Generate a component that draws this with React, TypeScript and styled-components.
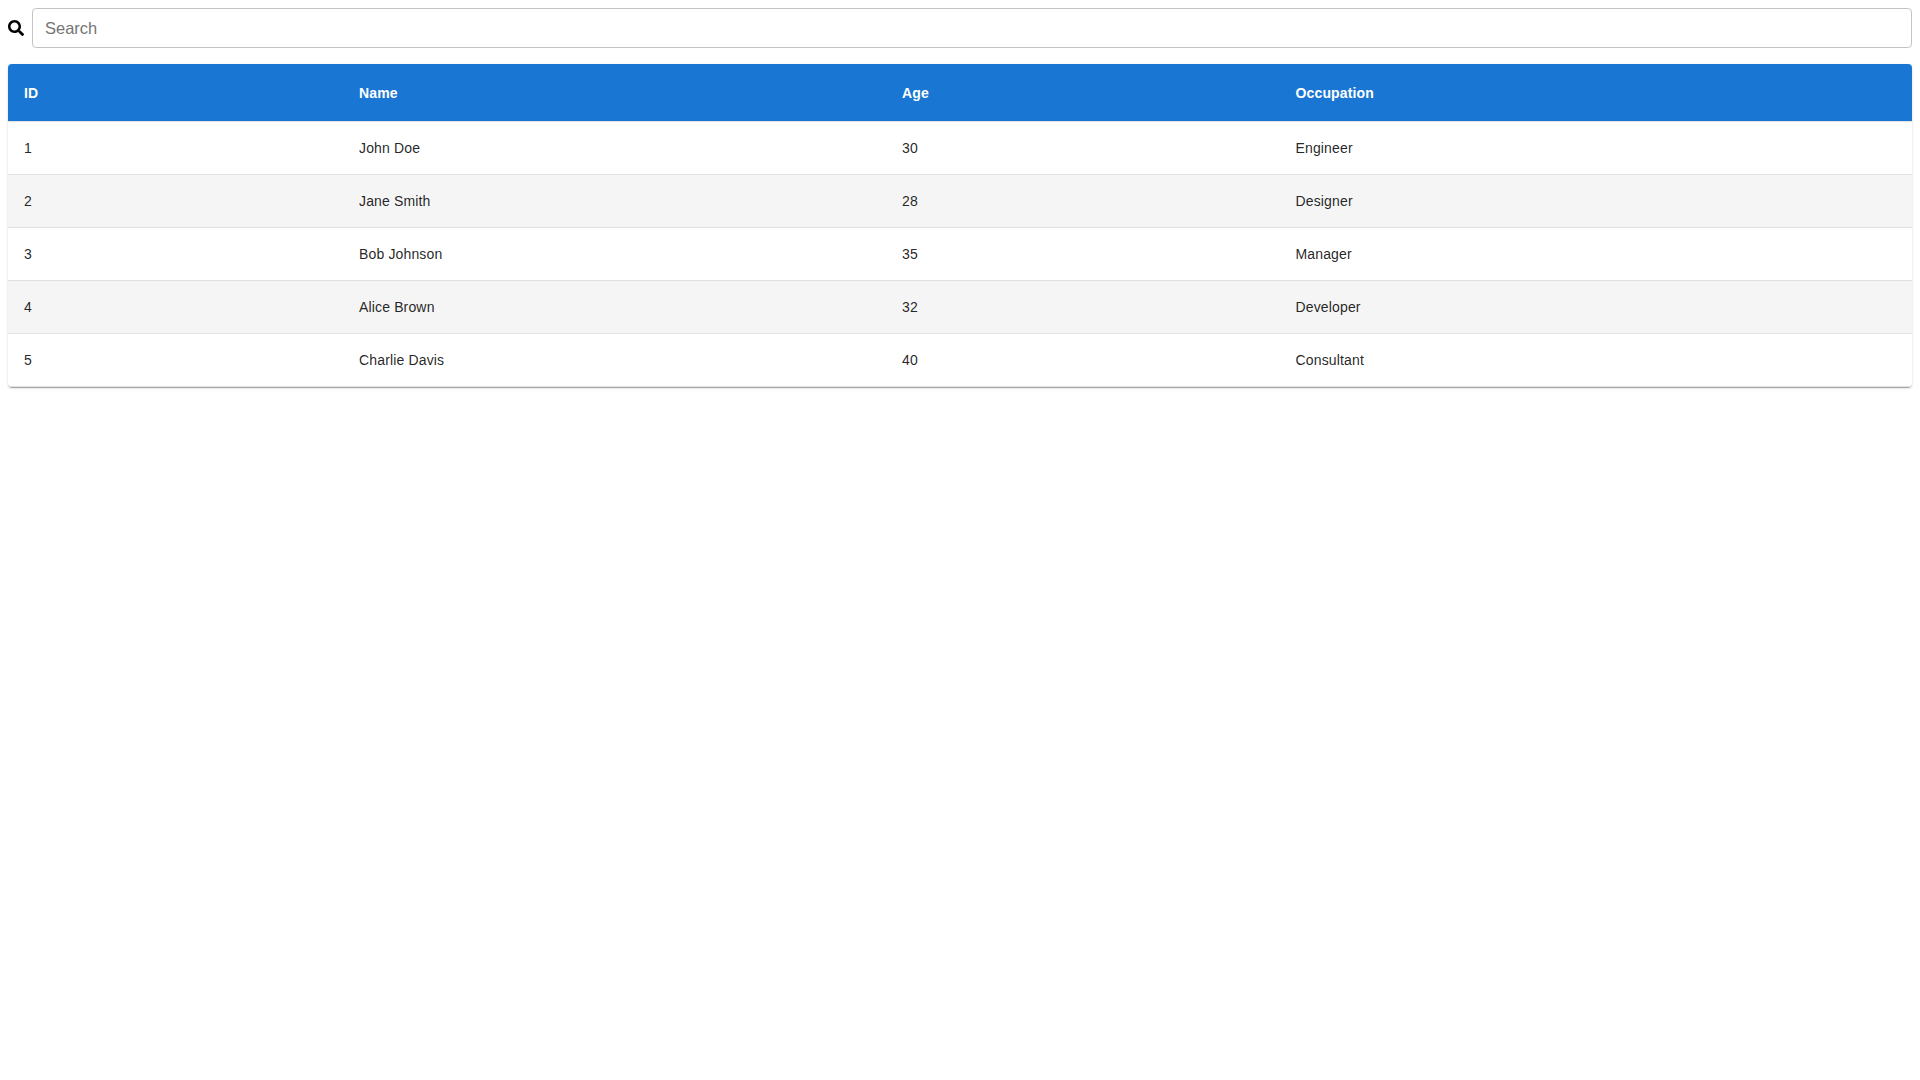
import * as React from "react";
import styled, { createGlobalStyle } from "styled-components";
import { FaSearch } from "react-icons/fa";

const GlobalStyle = createGlobalStyle`
  html, body {
    margin: 0;
    background: #ffffff;
  }
  body {
    padding: 8px;
    font-family: "Liberation Sans", Arial, sans-serif;
  }
`;

const SearchBar = styled.div`
  display: flex;
  align-items: center;
  gap: 8px;
  margin-bottom: 16px;
`;

const SearchInput = styled.input`
  flex: 1;
  height: 40px;
  box-sizing: border-box;
  padding: 8px 12px;
  border: 1px solid #c4c4c4;
  border-radius: 4px;
  font-family: inherit;
  font-size: 16.5px;
`;

const Table = styled.table`
  width: 100%;
  table-layout: fixed;
  border-collapse: separate;
  border-spacing: 0;
  border-radius: 4px;
  overflow: hidden;
  background: #fff;
  box-shadow: 0 2px 1px -1px rgba(0, 0, 0, 0.2), 0 1px 1px rgba(0, 0, 0, 0.14), 0 1px 3px rgba(0, 0, 0, 0.12);
  font-size: 14px;
  letter-spacing: 0.15px;
`;

const Col = styled.col<{ $width: number }>`
  width: ${(p) => p.$width}px;
`;

const HeadRow = styled.tr`
  background: #1976d2;
`;

const HeadCell = styled.th`
  padding: 17px 16px 16px;
  text-align: left;
  font-weight: 700;
  line-height: 24px;
  color: #fff;
  border-bottom: 1px solid #e0e0e0;
`;

const Row = styled.tr`
  &:nth-child(even) {
    background: #f5f5f5;
  }
`;

const Cell = styled.td`
  padding: 16px;
  line-height: 20px;
  color: rgba(0, 0, 0, 0.87);
  border-bottom: 1px solid #e0e0e0;
`;

const columnWidths = [335, 543, 393.5, 632.5];

const people = [
  { id: 1, name: "John Doe", age: 30, occupation: "Engineer" },
  { id: 2, name: "Jane Smith", age: 28, occupation: "Designer" },
  { id: 3, name: "Bob Johnson", age: 35, occupation: "Manager" },
  { id: 4, name: "Alice Brown", age: 32, occupation: "Developer" },
  { id: 5, name: "Charlie Davis", age: 40, occupation: "Consultant" },
];

export default function App() {
  return (
    <>
      <GlobalStyle />
      <SearchBar>
        <FaSearch size={16} color="#000" />
        <SearchInput placeholder="Search" />
      </SearchBar>
      <Table>
        <colgroup>
          {columnWidths.map((w) => (
            <Col key={w} $width={w} />
          ))}
        </colgroup>
        <thead>
          <HeadRow>
            <HeadCell>ID</HeadCell>
            <HeadCell>Name</HeadCell>
            <HeadCell>Age</HeadCell>
            <HeadCell>Occupation</HeadCell>
          </HeadRow>
        </thead>
        <tbody>
          {people.map((p) => (
            <Row key={p.id}>
              <Cell>{p.id}</Cell>
              <Cell>{p.name}</Cell>
              <Cell>{p.age}</Cell>
              <Cell>{p.occupation}</Cell>
            </Row>
          ))}
        </tbody>
      </Table>
    </>
  );
}
